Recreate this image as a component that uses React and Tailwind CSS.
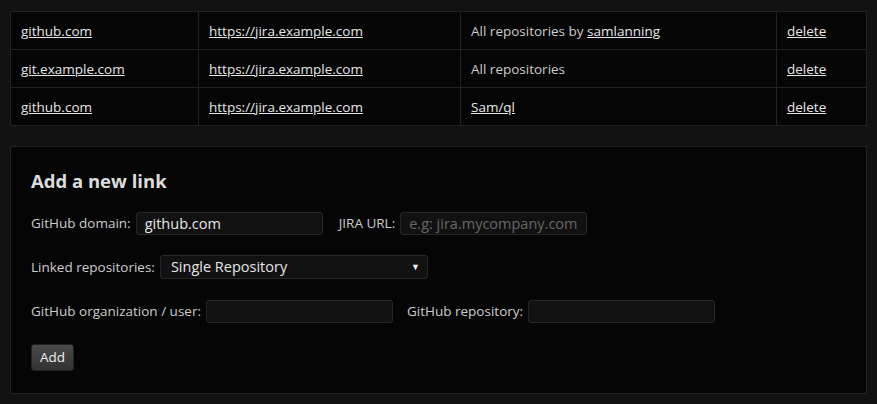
import React from "react";

const rows = [
  { domain: "github.com", jira: "https://jira.example.com", repos: "owner" },
  { domain: "git.example.com", jira: "https://jira.example.com", repos: "all" },
  { domain: "github.com", jira: "https://jira.example.com", repos: "repo" },
];

const Repos = ({ kind }) => {
  if (kind === "owner")
    return (
      <>
        All repositories by <a href="#" className="underline text-[#e6e6e6]">samlanning</a>
      </>
    );
  if (kind === "all") return <>All repositories</>;
  return (
    <a href="#" className="underline text-[#e6e6e6]">
      Sam/ql
    </a>
  );
};

const Field = ({ label, value, placeholder }) => (
  <label className="flex items-center gap-[5px]">
    <span>{label}</span>
    <input
      defaultValue={value}
      placeholder={placeholder}
      className="w-[187px] h-[23px] px-2 rounded-[3px] bg-[#111111] border border-[#262626] text-[14.5px] not-italic text-[#e6e6e6] placeholder:text-[#666] placeholder:not-italic outline-none"
    />
  </label>
);

export default function App() {
  return (
    <div
      className="min-h-[404px] bg-[#111111] px-[10px] pt-[11px] pb-[11px] text-[13.5px] text-[#cccccc]"
      style={{ fontFamily: '"Open Sans", "Noto Sans", sans-serif' }}
    >
      <table className="w-full table-fixed border-collapse bg-[#050505]">
        <colgroup>
          <col className="w-[188px]" />
          <col className="w-[262px]" />
          <col className="w-[316px]" />
          <col />
        </colgroup>
        <tbody>
          {rows.map((r, i) => (
            <tr key={i} className="h-[38px]">
              <td className="border border-[#222222] px-[10px] pt-[1px]">
                <a href="#" className="underline text-[#e6e6e6]">{r.domain}</a>
              </td>
              <td className="border border-[#222222] px-[10px] pt-[1px]">
                <a href="#" className="underline text-[#e6e6e6]">{r.jira}</a>
              </td>
              <td className="border border-[#222222] px-[10px] pt-[1px]">
                <Repos kind={r.repos} />
              </td>
              <td className="border border-[#222222] px-[10px] pt-[1px]">
                <a href="#" className="underline text-[#e6e6e6]">delete</a>
              </td>
            </tr>
          ))}
        </tbody>
      </table>

      <div className="mt-[20px] h-[248px] border border-[#222222] bg-[#050505] px-[20px] pt-[20px]">
        <h2 className="text-[18.5px] font-bold text-[#dddddd] leading-[28px]">Add a new link</h2>
        <div className="mt-[17px] flex items-center gap-[16px]">
          <Field label="GitHub domain:" value="github.com" />
          <Field label="JIRA URL:" placeholder="e.g: jira.mycompany.com" />
        </div>
        <div className="mt-[20px] flex items-center gap-[5px]">
          <span>Linked repositories:</span>
          <div className="relative">
            <select className="appearance-none w-[268px] h-[24px] pl-[10px] rounded-[3px] bg-[#111111] border border-[#262626] text-[14.5px] text-[#e6e6e6] outline-none">
              <option>Single Repository</option>
            </select>
            <span className="pointer-events-none absolute right-[8px] top-[5px] text-[9px] text-[#eeeeee]">▼</span>
          </div>
        </div>
        <div className="mt-[21px] flex items-center gap-[14px]">
          <Field label="GitHub organization / user:" />
          <Field label="GitHub repository:" />
        </div>
        <button className="mt-[21px] h-[27px] px-[8px] rounded-[3px] border border-[#222] bg-gradient-to-b from-[#4a4a4a] to-[#333333] text-[13.5px] text-[#eeeeee]">
          Add
        </button>
      </div>
    </div>
  );
}
